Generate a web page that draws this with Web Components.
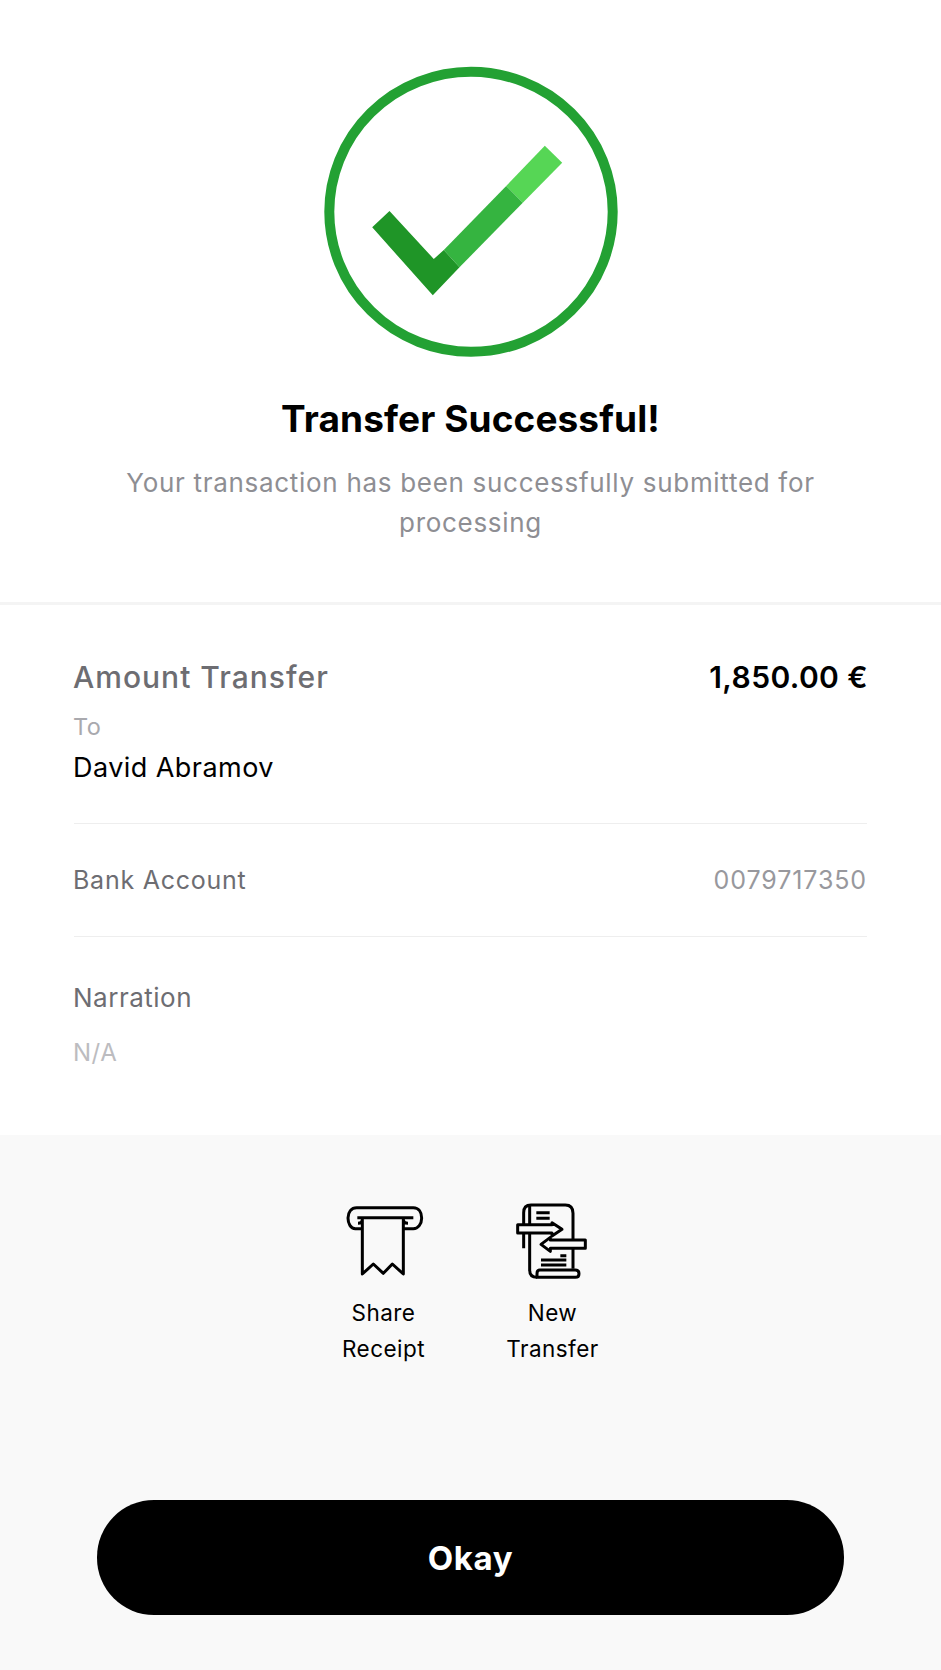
<!DOCTYPE html>
<html>
<head>
<meta charset="utf-8">
<title>Transfer Successful</title>
<style>
  html, body { margin: 0; background: #fff; }
  body { font-family: Inter, "Noto Sans", sans-serif; }
</style>
</head>
<body>
<transfer-screen>
  <success-hero slot="hero" heading="Transfer Successful!">Your transaction has been successfully submitted for processing</success-hero>
  <transfer-details slot="details"></transfer-details>
  <transfer-actions slot="actions">
    <action-tile icon="receipt">Share<br>Receipt</action-tile>
    <action-tile icon="transfer">New<br>Transfer</action-tile>
  </transfer-actions>
  <primary-button slot="cta">Okay</primary-button>
</transfer-screen>

<script>
class TransferScreen extends HTMLElement {
  constructor() {
    super();
    this.attachShadow({ mode: "open" }).innerHTML = `
      <style>
        :host { display: flex; flex-direction: column; width: 100%; height: 1670px; }
        footer {
          flex: 1;
          display: flex;
          flex-direction: column;
          background: #f9f9f9;
        }
      </style>
      <slot name="hero"></slot>
      <slot name="details"></slot>
      <footer>
        <slot name="actions"></slot>
        <slot name="cta"></slot>
      </footer>
    `;
  }
}

class SuccessHero extends HTMLElement {
  constructor() {
    super();
    this.attachShadow({ mode: "open" }).innerHTML = `
      <style>
        :host {
          display: flex;
          flex-direction: column;
          align-items: center;
          height: 605px;
          padding-top: 66px;
          box-sizing: border-box;
          border-bottom: 3px solid #f4f4f4;
          text-align: center;
        }
        svg { display: block; }
        h1 {
          margin: 38px 0 0;
          font-size: 37px;
          line-height: 46px;
          font-weight: 700;
          letter-spacing: 0.1px;
          color: #000;
        }
        p {
          margin: 21px 0 0;
          width: 720px;
          font-size: 26px;
          line-height: 40px;
          letter-spacing: 0.7px;
          color: #8e8e93;
        }
      </style>
      <svg width="294" height="292" viewBox="323.5 66 294 292">
        <ellipse cx="470.5" cy="211.8" rx="141.7" ry="140" fill="none" stroke="#23a133" stroke-width="10"/>
        <polygon points="505.7,186 544.3,145.7 561.7,162.7 522.3,202.7" fill="#56d655"/>
        <polygon points="443.3,250 505.7,186 522.3,202.7 459,267.3" fill="#35b440"/>
        <polygon points="371.7,227.3 389,211 433.3,259 443.3,250 459,267.3 432.3,295.3" fill="#1f9527"/>
      </svg>
      <h1></h1>
      <p><slot></slot></p>
    `;
    this.shadowRoot.querySelector("h1").textContent = this.getAttribute("heading");
  }
}

class TransferDetails extends HTMLElement {
  constructor() {
    super();
    this.attachShadow({ mode: "open" }).innerHTML = `
      <style>
        :host {
          display: block;
          height: 530px;
          padding: 0 74px;
          color: #000;
        }
        .amount {
          display: flex;
          justify-content: space-between;
          align-items: center;
          margin: 0 -1px;
          padding-top: 52px;
          line-height: 40px;
          font-size: 30px;
          font-weight: 500;
        }
        .amount span { color: #6d6d72; letter-spacing: 1px; }
        .amount strong { font-weight: 600; letter-spacing: 0.4px; }
        .to { margin: 15px 0 0 -1px; font-size: 23.5px; line-height: 30px; color: #a9a9ae; letter-spacing: 0.5px; }
        .name { margin: 8px 0 0 -1px; font-size: 27px; line-height: 36px; letter-spacing: 0.45px; }
        .row {
          display: flex;
          justify-content: space-between;
          align-items: center;
          height: 111px;
          border-top: 1px solid #eeeeee;
          font-size: 25px;
          color: #6d6d72;
          letter-spacing: 0.75px;
        }
        .row span { margin-left: -1px; }
        .first { margin-top: 37px; }
        .row b { font-weight: 400; color: #98989d; letter-spacing: 0.9px; }
        .narration { padding-top: 44px; border-top: 1px solid #eeeeee; margin-top: 1px; }
        .narration div { margin-left: -1px; font-size: 26px; line-height: 34px; color: #6d6d72; letter-spacing: 0.5px; }
        .narration small { display: block; margin: 22px 0 0 -1px; font-size: 24px; line-height: 32px; color: #bcbcc0; letter-spacing: 0.5px; }
      </style>
      <div class="amount"><span>Amount Transfer</span><strong>1,850.00 €</strong></div>
      <div class="to">To</div>
      <div class="name">David Abramov</div>
      <div class="row first"><span>Bank Account</span><b>0079717350</b></div>
      <div class="narration">
        <div>Narration</div>
        <small>N/A</small>
      </div>
    `;
  }
}

class TransferActions extends HTMLElement {
  constructor() {
    super();
    this.attachShadow({ mode: "open" }).innerHTML = `
      <style>
        :host {
          display: flex;
          justify-content: center;
          gap: 49px;
          padding: 55px 5px 0 0;
          height: 365px;
          box-sizing: border-box;
        }
      </style>
      <slot></slot>
    `;
  }
}

const ICONS = {
  receipt: {
    box: "25 0 330 270",
    paths: `
      <path d="M128 116H104C90 116 82 100 82 84C82 66 92 53 108 53H278C294 53 303 66 303 84C303 102 292 116 278 116H248"/>
      <path d="M110 83H278"/>
      <path d="M112 100Q125 100 125 88V252L158 222L188 250L215 222L248 252V88Q248 100 262 100" fill="#f9f9f9"/>
    `,
  },
  transfer: {
    box: "-7 0 330 270",
    paths: `
      <path d="M70 175V68Q70 45 92 45H195Q218 45 218 70V236"/>
      <path d="M88 45V240Q88 262 110 262"/>
      <path d="M108 68H148M108 85H148M180 197H198M122 210H198M122 225H198"/>
      <path d="M110 262H225Q236 262 236 251T225 240H118Q110 240 110 251T110 262Z" fill="#f9f9f9"/>
      <path d="M52 104H155V98L185 118L155 138V129H52Z" fill="#f9f9f9"/>
      <path d="M255 150H150V142L122 163L150 184V175H255Z" fill="#f9f9f9"/>
    `,
  },
};

class ActionTile extends HTMLElement {
  constructor() {
    super();
    const icon = ICONS[this.getAttribute("icon")];
    this.attachShadow({ mode: "open" }).innerHTML = `
      <style>
        :host {
          display: flex;
          flex-direction: column;
          align-items: center;
          width: 120px;
          text-align: center;
          font-size: 22.5px;
          line-height: 36px;
          letter-spacing: 0.45px;
          color: #000;
        }
        svg { display: block; fill: none; stroke: #000; stroke-width: 9; stroke-linejoin: round; margin-bottom: 15px; }
      </style>
      <svg width="110" height="90" viewBox="${icon.box}">${icon.paths}</svg>
      <div><slot></slot></div>
    `;
  }
}

class PrimaryButton extends HTMLElement {
  constructor() {
    super();
    this.attachShadow({ mode: "open" }).innerHTML = `
      <style>
        :host { display: block; padding: 0 97px; }
        button {
          display: block;
          width: 100%;
          height: 115px;
          border: 0;
          border-radius: 57px;
          background: #000;
          color: #fff;
          font: 700 33px Inter, "Noto Sans", sans-serif;
          letter-spacing: 0.6px;
        }
      </style>
      <button><slot></slot></button>
    `;
  }
}

customElements.define("transfer-screen", TransferScreen);
customElements.define("success-hero", SuccessHero);
customElements.define("transfer-details", TransferDetails);
customElements.define("transfer-actions", TransferActions);
customElements.define("action-tile", ActionTile);
customElements.define("primary-button", PrimaryButton);
</script>
</body>
</html>
